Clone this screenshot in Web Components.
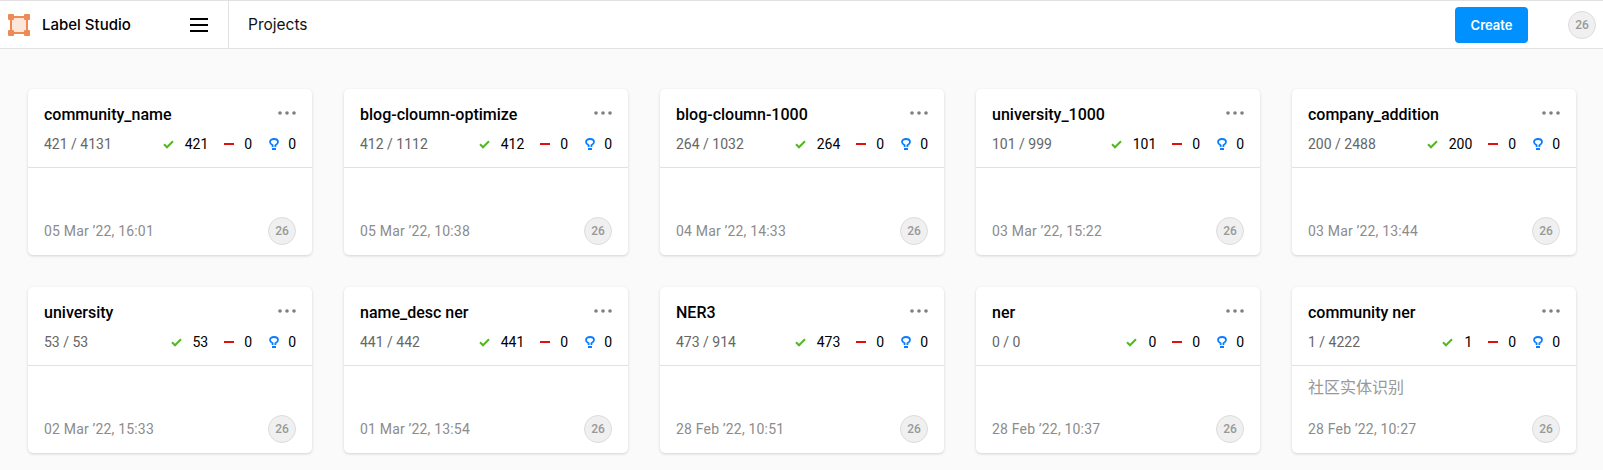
<!DOCTYPE html>
<html>
<head>
<meta charset="utf-8">
<title>Label Studio</title>
<style>
  html, body { margin: 0; padding: 0; background: #fafafa; }
  body { font-family: Roboto, "Noto Sans CJK SC", sans-serif; height: 470px; overflow: hidden; }
</style>
</head>
<body>
<ls-app></ls-app>
<script>
class LsAvatar extends HTMLElement {
  constructor() {
    super();
    this.attachShadow({ mode: "open" });
    this.shadowRoot.innerHTML = `
      <style>
        :host { display: flex; width: 28px; height: 28px; box-sizing: border-box; border-radius: 50%;
          align-items: center; justify-content: center; background: #f0f0f0; border: 1px solid #dcdcdc;
          color: #999; font: 500 12px Roboto, sans-serif; flex: none; }
      </style>
      <slot></slot>`;
  }
}
customElements.define("ls-avatar", LsAvatar);

class LsHeader extends HTMLElement {
  constructor() {
    super();
    this.attachShadow({ mode: "open" });
    this.shadowRoot.innerHTML = `
      <style>
        :host { display: flex; height: 49px; box-sizing: border-box; background: #fff;
          border-top: 1px solid #e2e2e2; border-bottom: 1px solid #e2e2e2; align-items: stretch; }
        .brand { width: 229px; box-sizing: border-box; display: flex; align-items: center;
          border-right: 1px solid #e2e2e2; padding-left: 8px; }
        .brand svg.logo { display: block; }
        .name { font: 500 15px Inter, sans-serif; color: #000; margin-left: 12px; width: 148px; white-space: nowrap; }
        .menu { display: block; }
        .title { font: 400 15.5px Inter, sans-serif; color: #111; padding-left: 19px; flex: 1; align-self: center; }
        .create { width: 73px; height: 36px; align-self: center; box-sizing: border-box; background: #0091ff;
          color: #fff; border-radius: 4px; font: 600 13px Inter, sans-serif; display: flex;
          align-items: center; justify-content: center; margin-right: 40px; }
        .right { align-self: center; margin-right: 7px; }
      </style>
      <div class="brand">
        <svg class="logo" width="22" height="22" viewBox="0 0 22 22">
          <rect x="3" y="3" width="16" height="16" fill="#fde6da" stroke="#ef8a54" stroke-width="2"/>
          <rect x="0" y="0" width="6" height="6" rx="1" fill="#ef8a54"/>
          <rect x="16" y="0" width="6" height="6" rx="1" fill="#ef8a54"/>
          <rect x="0" y="16" width="6" height="6" rx="1" fill="#ef8a54"/>
          <rect x="16" y="16" width="6" height="6" rx="1" fill="#ef8a54"/>
        </svg>
        <span class="name">Label Studio</span>
        <svg class="menu" width="18" height="14" viewBox="0 0 18 14">
          <path d="M0 1h18M0 7h18M0 13h18" stroke="#000" stroke-width="2" fill="none"/>
        </svg>
      </div>
      <div class="title">Projects</div>
      <div class="create">Create</div>
      <ls-avatar class="right">26</ls-avatar>`;
  }
}
customElements.define("ls-header", LsHeader);

class LsCard extends HTMLElement {
  constructor() {
    super();
    this.attachShadow({ mode: "open" });
  }

  connectedCallback() {
    const get = n => this.getAttribute(n) || "";
    this.shadowRoot.innerHTML = `
      <style>
        :host { display: flex; flex-direction: column; height: 166px; background: #fff; border-radius: 5px;
          box-shadow: 0 1px 3px rgba(0,0,0,.16); box-sizing: border-box; }
        .head { height: 79px; padding: 0 16px; box-sizing: border-box; border-bottom: 1px solid #e2e2e2; flex: none; }
        .row1 { display: flex; justify-content: space-between; height: 40px; padding-top: 16px; box-sizing: border-box; }
        .name { font: 500 16px/19px Roboto, sans-serif; color: #000; }
        .dots { display: block; margin-top: 6px; }
        .row2 { display: flex; align-items: center; height: 24px; margin-top: 3px; font-size: 14px; }
        .progress { flex: 1; color: #666; }
        .stat { display: flex; align-items: center; color: #000; }
        .stat svg { display: block; margin-right: 10px; }
        .stat.ok svg { margin-right: 11px; }
        .stat + .stat { margin-left: 16px; }
        .stat.pred { margin-left: 17px; }
        .stat.pred svg { margin-right: 9px; }
        .body { flex: 1; padding: 0 16px; display: flex; flex-direction: column; min-height: 0; }
        .desc { font: 400 16px/19px Roboto, "Noto Sans CJK SC", sans-serif; color: #999; margin-top: 12px; height: 19px; }
        .foot { margin-top: auto; display: flex; justify-content: space-between; align-items: center; height: 28px; margin-bottom: 10px; }
        .date { color: #8c8c8c; font-size: 14px; letter-spacing: .18px; }
      </style>
      <div class="head">
        <div class="row1">
          <div class="name">${get("name")}</div>
          <svg class="dots" width="18" height="4" viewBox="0 0 18 4" fill="#7f7f7f">
            <circle cx="2" cy="2" r="1.8"/><circle cx="9" cy="2" r="1.8"/><circle cx="16" cy="2" r="1.8"/>
          </svg>
        </div>
        <div class="row2">
          <div class="progress">${get("progress")}</div>
          <div class="stat ok">
            <svg width="11" height="9" viewBox="0 0 11 9"><path d="M1 4.300l3 3L10 1.300" stroke="#52b81f" stroke-width="2" fill="none"/></svg>
            <span>${get("done")}</span>
          </div>
          <div class="stat">
            <svg width="10" height="10" viewBox="0 0 10 10"><path d="M0 5h10" stroke="#e01010" stroke-width="2"/></svg>
            <span>0</span>
          </div>
          <div class="stat pred">
            <svg width="10" height="12" viewBox="0 0 10 12"><path d="M3.600 9V7.200C2 6.200 1 5.200 1 4 1 2 2.800 1 5 1s4 1 4 3c0 1.200-1 2.200-2.600 3.200V9M3 11h4" stroke="#0a7cff" stroke-width="1.800" fill="none"/></svg>
            <span>0</span>
          </div>
        </div>
      </div>
      <div class="body">
        <div class="desc">${get("desc")}</div>
        <div class="foot">
          <div class="date">${get("date")}</div>
          <ls-avatar>26</ls-avatar>
        </div>
      </div>`;
  }
}
customElements.define("ls-card", LsCard);

const projects = [
  ["community_name", "421 / 4131", "421", "05 Mar ’22, 16:01"],
  ["blog-cloumn-optimize", "412 / 1112", "412", "05 Mar ’22, 10:38"],
  ["blog-cloumn-1000", "264 / 1032", "264", "04 Mar ’22, 14:33"],
  ["university_1000", "101 / 999", "101", "03 Mar ’22, 15:22"],
  ["company_addition", "200 / 2488", "200", "03 Mar ’22, 13:44"],
  ["university", "53 / 53", "53", "02 Mar ’22, 15:33"],
  ["name_desc ner", "441 / 442", "441", "01 Mar ’22, 13:54"],
  ["NER3", "473 / 914", "473", "28 Feb ’22, 10:51"],
  ["ner", "0 / 0", "0", "28 Feb ’22, 10:37"],
  ["community ner", "1 / 4222", "1", "28 Feb ’22, 10:27", "社区实体识别"]
];

class LsApp extends HTMLElement {
  constructor() {
    super();
    this.attachShadow({ mode: "open" });
    this.shadowRoot.innerHTML = `
      <style>
        :host { display: block; }
        .grid { display: grid; grid-template-columns: repeat(5, 284px); gap: 32px; padding: 40px 28px 0; }
      </style>
      <ls-header></ls-header>
      <div class="grid"></div>`;
    const grid = this.shadowRoot.querySelector(".grid");
    projects.forEach(p => {
      const card = document.createElement("ls-card");
      card.setAttribute("name", p[0]);
      card.setAttribute("progress", p[1]);
      card.setAttribute("done", p[2]);
      card.setAttribute("date", p[3]);
      if (p[4]) card.setAttribute("desc", p[4]);
      grid.appendChild(card);
    });
  }
}
customElements.define("ls-app", LsApp);
</script>
</body>
</html>
